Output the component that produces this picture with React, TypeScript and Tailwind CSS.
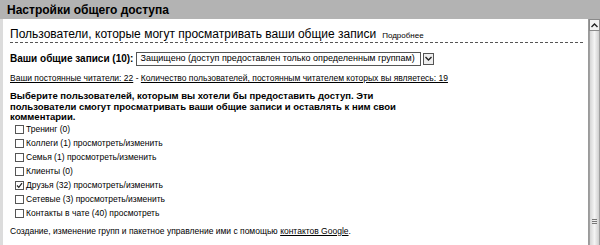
import { Fragment } from "react";

const groups = [
  { name: "Тренинг", count: 0, action: "" },
  { name: "Коллеги", count: 1, action: "просмотреть/изменить" },
  { name: "Семья", count: 1, action: "просмотреть/изменить" },
  { name: "Клиенты", count: 0, action: "" },
  { name: "Друзья", count: 32, action: "просмотреть/изменить", checked: true },
  { name: "Сетевые", count: 3, action: "просмотреть/изменить" },
  { name: "Контакты в чате", count: 40, action: "просмотреть" },
];

function Box({ checked }: { checked?: boolean }) {
  return (
    <span className="flex h-[9px] w-[9px] shrink-0 items-center justify-center border border-[#555] bg-white">
      {checked && (
        <svg width="7" height="7" viewBox="0 0 7 7">
          <path d="M1 3.5 L2.8 5.3 L6 1.2" fill="none" stroke="#222" strokeWidth="1.2" />
        </svg>
      )}
    </span>
  );
}

function Scrollbar() {
  return (
    <div className="flex w-[12px] shrink-0 flex-col border-l border-[#9a9a9a] bg-[#e4e4e4]">
      <div className="flex h-[12px] items-center justify-center border border-[#8a8a8a] bg-[#f2f2f2]">
        <svg width="7" height="5" viewBox="0 0 7 5">
          <path d="M0.5 4 L3.5 1 L6.5 4" fill="none" stroke="#222" strokeWidth="1.4" />
        </svg>
      </div>
      <div className="flex flex-1 flex-col items-center justify-end border-x border-[#a0a0a0] bg-gradient-to-r from-[#d6d6d6] via-[#f4f4f4] to-[#cfcfcf] pb-[21px]">
        <div className="flex flex-col gap-[1px]">
          <span className="h-px w-[5px] bg-[#777]" />
          <span className="h-px w-[5px] bg-[#777]" />
          <span className="h-px w-[5px] bg-[#777]" />
        </div>
      </div>
    </div>
  );
}

export default function App() {
  return (
    <div className="flex h-[245px] w-[600px] flex-col overflow-hidden bg-white font-['Liberation_Sans',Arial,sans-serif] text-black">
      <div className="flex h-[19px] shrink-0 items-center bg-[#b3b3b3] pl-[7px]">
        <h1 className="text-[12px] font-bold leading-none">Настройки общего доступа</h1>
      </div>
      <div className="flex flex-1 overflow-hidden">
        <div className="w-[3px] shrink-0 bg-[#dcdcdc]" />
        <div className="flex-1 pl-[7px] pr-[5px] pt-[9px]">
          <div className="flex items-baseline gap-[6px] border-b border-dashed border-[#555]">
            <h2 className="whitespace-nowrap text-[12px] leading-[13px]">
              Пользователи, которые могут просматривать ваши общие записи
            </h2>
            <span className="text-[8px]">Подробнее</span>
          </div>

          <div className="mt-[8px] flex items-center">
            <span className="mr-[3px] text-[10px] font-bold">Ваши общие записи (10):</span>
            <div className="flex h-[14px] w-[285px] items-center border border-[#555] pl-[3px] text-[9px]">
              Защищено (доступ предоставлен только определенным группам)
            </div>
            <div className="ml-[2px] flex h-[12px] w-[11px] items-center justify-center border border-[#555] bg-[#eee]">
              <svg width="7" height="5" viewBox="0 0 7 5">
                <path d="M0.5 1 L3.5 4 L6.5 1" fill="none" stroke="#222" strokeWidth="1.4" />
              </svg>
            </div>
          </div>

          <p className="mt-[7px] text-[8.5px] leading-[11px]">
            <span className="underline">Ваши постоянные читатели: 22</span> -{" "}
            <span className="underline">
              Количество пользователей, постоянным читателем которых вы являетесь: 19
            </span>
          </p>

          <p className="mt-[7px] whitespace-nowrap text-[9.5px] font-bold leading-[10.5px]">
            Выберите пользователей, которым вы хотели бы предоставить доступ. Эти
            <br />
            пользователи смогут просматривать ваши общие записи и оставлять к ним свои
            <br />
            комментарии.
          </p>

          <div className="flex flex-col pl-[5px]">
            {groups.map((g) => (
              <label key={g.name} className="flex h-[14px] items-center gap-[2px] text-[8.5px]">
                <Box checked={g.checked} />
                <span>
                  {g.name} ({g.count})
                  {g.action && (
                    <Fragment>
                      {" "}
                      <span>{g.action}</span>
                    </Fragment>
                  )}
                </span>
              </label>
            ))}
          </div>

          <p className="mt-[5px] text-[8.5px] leading-[11px]">
            Создание, изменение групп и пакетное управление ими с помощью{" "}
            <span className="underline">контактов Google</span>.
          </p>
        </div>
        <Scrollbar />
      </div>
    </div>
  );
}
